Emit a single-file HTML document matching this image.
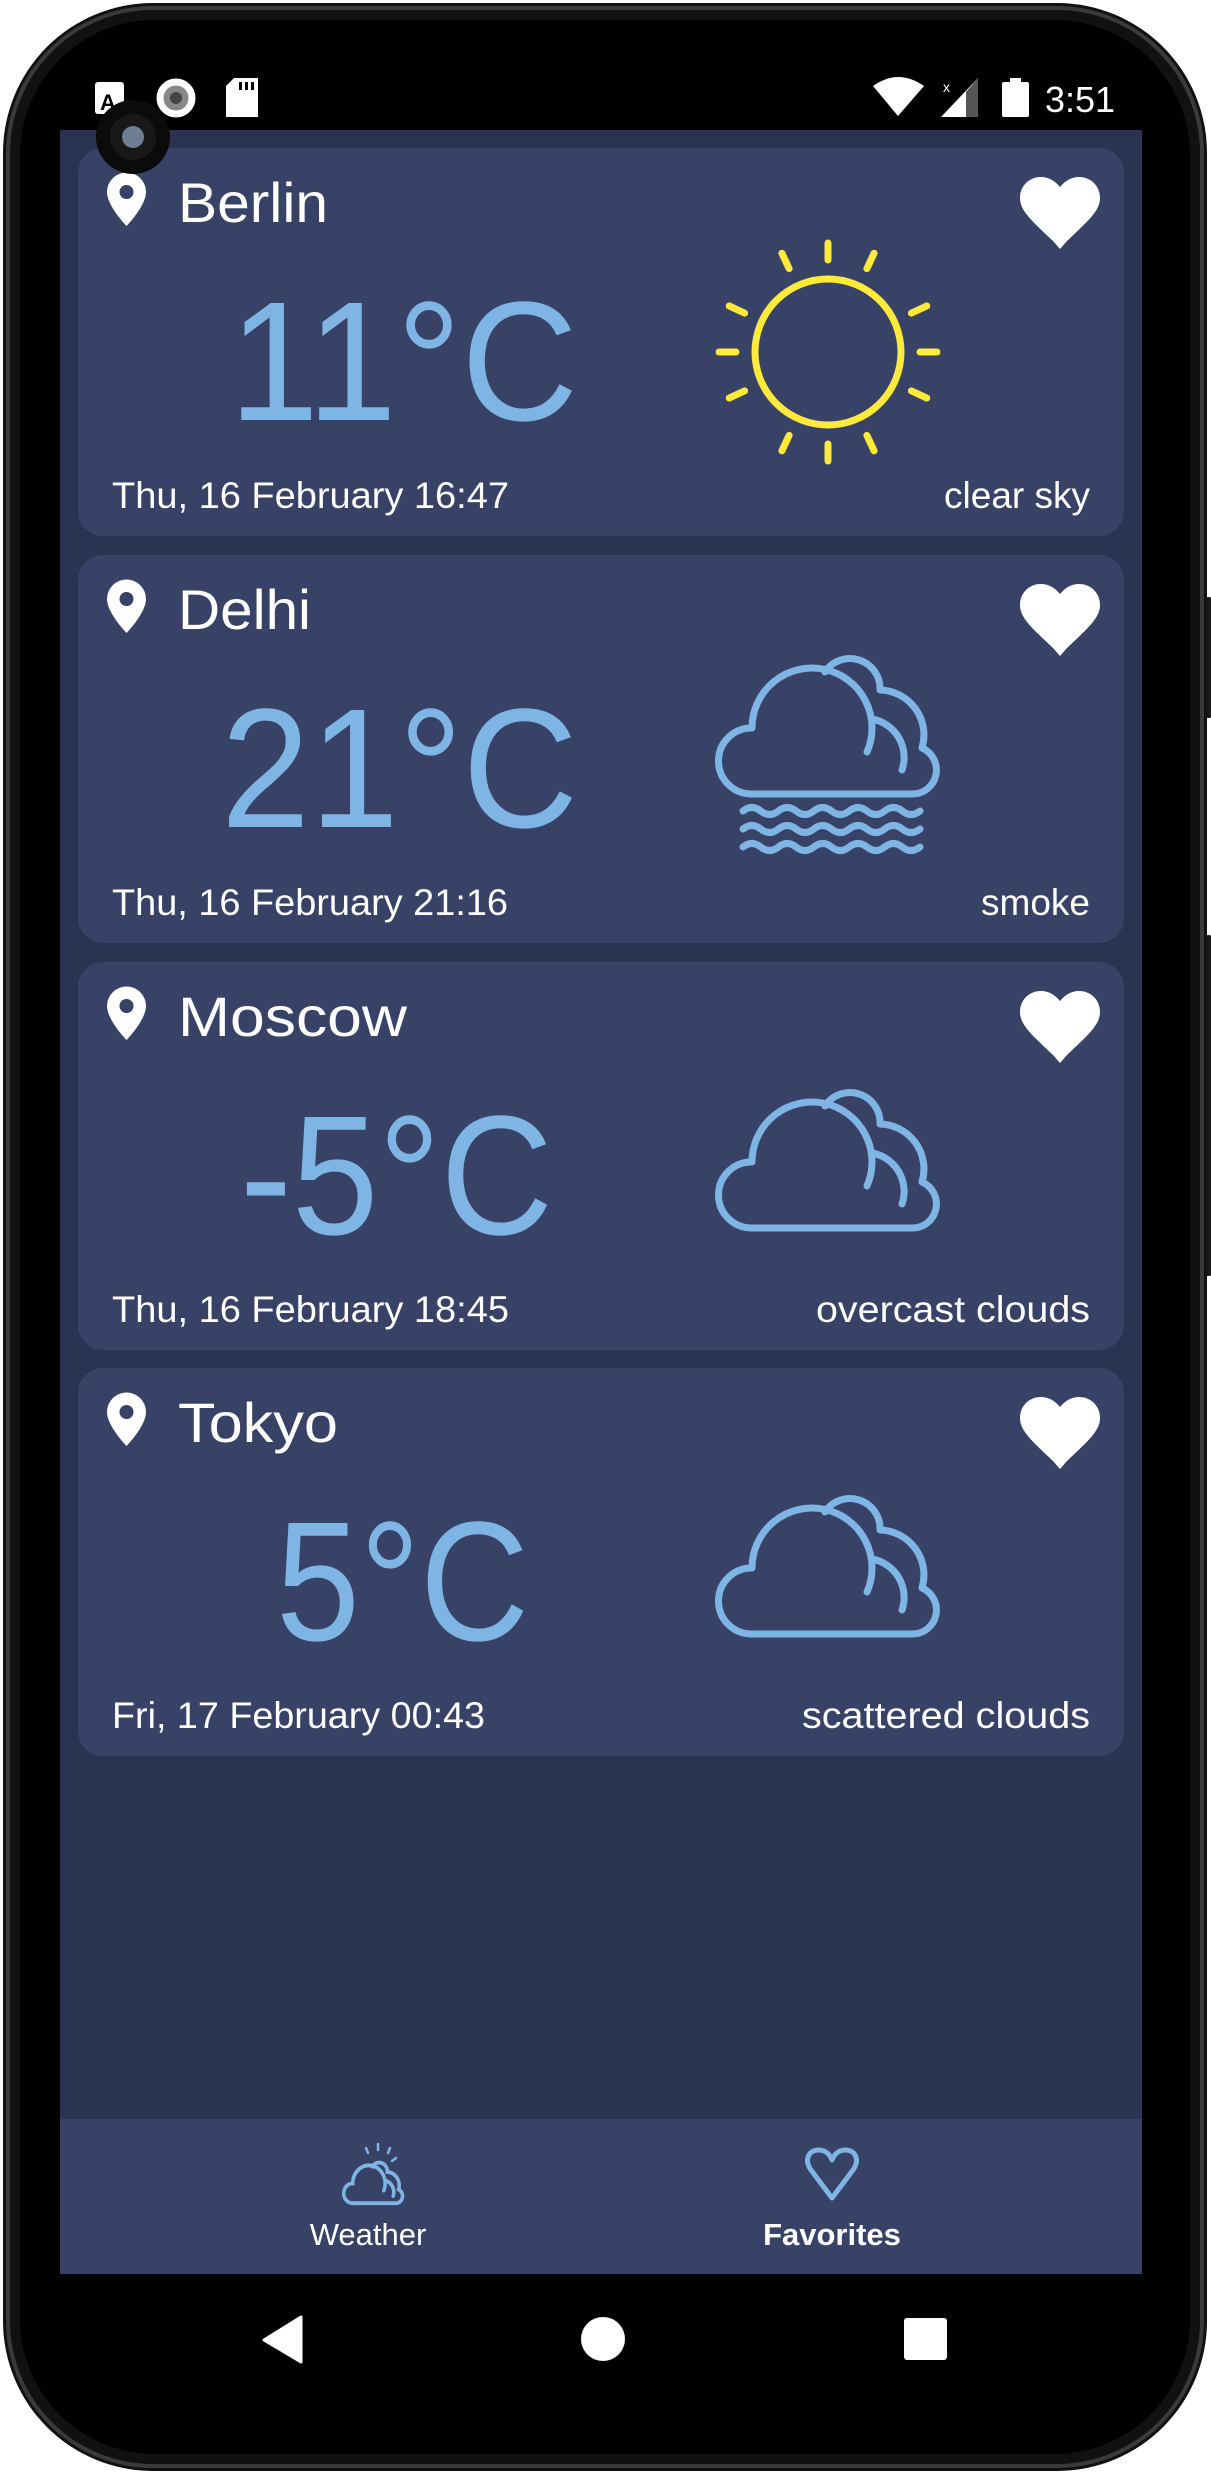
<!DOCTYPE html>
<html><head><meta charset="utf-8"><style>
html,body{margin:0;padding:0;background:#fff;width:1211px;height:2474px;overflow:hidden}
svg{display:block}
text{font-family:"Liberation Sans",sans-serif}
</style></head><body>
<svg width="1211" height="2474" viewBox="0 0 1211 2474" xmlns="http://www.w3.org/2000/svg">
<defs>
<g id="cloud" fill="none" stroke="#7fb5e5" stroke-width="7" stroke-linecap="round" stroke-linejoin="round">
<path d="M61 154 A33 33 0 0 1 62 88 A60 60 0 1 1 177 112"/>
<path d="M61 154 L222 154 A24 24 0 0 0 232 108 A45 45 0 0 0 190 50 A30 30 0 0 0 135 32"/>
<path d="M182 79 A39 39 0 0 1 212 130"/>
</g>
<path id="pin" d="M0 0 a19.5 19.5 0 1 1 39 0 c0 14 -19.5 34 -19.5 34 s-19.5 -20 -19.5 -34 z"/>
<path id="heart" d="M40 72 L33 64 C12 44 0 34 0 21 C0 9 9 0 21 0 C29 0 35 4 40 10 C45 4 51 0 59 0 C71 0 80 9 80 21 C80 34 68 44 47 64 Z"/>
<line id="ray" x1="832" y1="260" x2="832" y2="243"/>
</defs>
<!-- phone body -->
<rect x="1202" y="597" width="10" height="121" rx="3" fill="#1a1a1a"/>
<rect x="1202" y="935" width="10" height="341" rx="3" fill="#1a1a1a"/>
<rect x="3" y="3" width="1204" height="2468" rx="150" fill="#111"/>
<rect x="8" y="8" width="1194" height="2458" rx="145" fill="none" stroke="#3a3a3a" stroke-width="4"/>
<rect x="20" y="20" width="1170" height="2434" rx="135" fill="#000"/>
<!-- app -->
<rect x="60" y="130" width="1082" height="1990" fill="#2a3352"/>
<rect x="60" y="2119" width="1082" height="155" fill="#384266"/>

<!-- status bar -->
<rect x="95" y="82" width="29" height="32" rx="3" fill="#fff"/>
<text x="100" y="110" font-size="22" font-weight="bold" fill="#000">A</text>
<circle cx="176" cy="98" r="16" fill="#888" stroke="#fff" stroke-width="7"/>
<circle cx="176" cy="98" r="6" fill="#444"/>
<path d="M234 78 H258 V117 H226 V86 Z" fill="#fff"/>
<rect x="239" y="82" width="3" height="8" fill="#000"/><rect x="245" y="82" width="3" height="8" fill="#000"/><rect x="251" y="82" width="3" height="8" fill="#000"/>
<path d="M873 86 Q898 68 924 86 L898 116 Z" fill="#fff"/>
<path d="M978 78 V117 H941 Z" fill="#fff"/>
<path d="M978 78 V117 H966 V92 Z" fill="#555"/>
<text x="943" y="92" font-size="14" fill="#fff">x</text>
<rect x="1002" y="82" width="27" height="35" rx="2" fill="#fff"/>
<rect x="1010" y="78" width="11" height="5" fill="#fff"/>
<text x="1045" y="112" font-size="36" fill="#fff">3:51</text>

<!-- Card 1 Berlin -->
<rect x="78" y="148" width="1046" height="388" rx="25" fill="#384266"/>
<use href="#pin" x="107" y="192" fill="#fff"/><circle cx="126.5" cy="192" r="7" fill="#384266"/>
<text x="178" y="222" font-size="56" fill="#fff" textLength="150" lengthAdjust="spacingAndGlyphs">Berlin</text>
<use href="#heart" x="1020" y="177" fill="#fff"/>
<text x="229" y="420" font-size="170" fill="#7fb5e5" textLength="349" lengthAdjust="spacingAndGlyphs">11°C</text>
<g stroke="#ffe93b" stroke-width="7" stroke-linecap="round" fill="none">
<circle cx="828" cy="352" r="73"/>
<g transform="translate(-4 0)">
<use href="#ray"/>
<use href="#ray" transform="rotate(25 832 352)"/>
<use href="#ray" transform="rotate(65 832 352)"/>
<use href="#ray" transform="rotate(90 832 352)"/>
<use href="#ray" transform="rotate(115 832 352)"/>
<use href="#ray" transform="rotate(155 832 352)"/>
<use href="#ray" transform="rotate(180 832 352)"/>
<use href="#ray" transform="rotate(205 832 352)"/>
<use href="#ray" transform="rotate(245 832 352)"/>
<use href="#ray" transform="rotate(270 832 352)"/>
<use href="#ray" transform="rotate(295 832 352)"/>
<use href="#ray" transform="rotate(335 832 352)"/>
</g>
</g>
<text x="112" y="508" font-size="37" fill="#fff" textLength="397" lengthAdjust="spacingAndGlyphs">Thu, 16 February 16:47</text>
<text x="1090" y="508" font-size="37" fill="#fff" text-anchor="end">clear sky</text>

<!-- Card 2 Delhi -->
<rect x="78" y="555" width="1046" height="388" rx="25" fill="#384266"/>
<use href="#pin" x="107" y="599" fill="#fff"/><circle cx="126.5" cy="599" r="7" fill="#384266"/>
<text x="178" y="629" font-size="56" fill="#fff" textLength="133" lengthAdjust="spacingAndGlyphs">Delhi</text>
<use href="#heart" x="1020" y="584" fill="#fff"/>
<text x="221" y="827" font-size="170" fill="#7fb5e5" textLength="357" lengthAdjust="spacingAndGlyphs">21°C</text>
<g transform="translate(690 640)">
<use href="#cloud"/>
<g fill="none" stroke="#7fb5e5" stroke-width="7" stroke-linecap="round">
<path d="M53 171 q8.85 -7 17.7 0 t17.7 0 t17.7 0 t17.7 0 t17.7 0 t17.7 0 t17.7 0 t17.7 0 t17.7 0 t17.7 0"/>
<path d="M53 189 q8.85 -7 17.7 0 t17.7 0 t17.7 0 t17.7 0 t17.7 0 t17.7 0 t17.7 0 t17.7 0 t17.7 0 t17.7 0"/>
<path d="M53 207 q8.85 -7 17.7 0 t17.7 0 t17.7 0 t17.7 0 t17.7 0 t17.7 0 t17.7 0 t17.7 0 t17.7 0 t17.7 0"/>
</g></g>
<text x="112" y="915" font-size="37" fill="#fff" textLength="396" lengthAdjust="spacingAndGlyphs">Thu, 16 February 21:16</text>
<text x="1090" y="915" font-size="37" fill="#fff" text-anchor="end">smoke</text>

<!-- Card 3 Moscow -->
<rect x="78" y="962" width="1046" height="388" rx="25" fill="#384266"/>
<use href="#pin" x="107" y="1006" fill="#fff"/><circle cx="126.5" cy="1006" r="7" fill="#384266"/>
<text x="178" y="1036" font-size="56" fill="#fff" textLength="229" lengthAdjust="spacingAndGlyphs">Moscow</text>
<use href="#heart" x="1020" y="991" fill="#fff"/>
<text x="240" y="1234" font-size="170" fill="#7fb5e5" textLength="313" lengthAdjust="spacingAndGlyphs">-5°C</text>
<use href="#cloud" transform="translate(690 1074)"/>
<text x="112" y="1322" font-size="37" fill="#fff" textLength="397" lengthAdjust="spacingAndGlyphs">Thu, 16 February 18:45</text>
<text x="1090" y="1322" font-size="37" fill="#fff" text-anchor="end" textLength="274" lengthAdjust="spacingAndGlyphs">overcast clouds</text>

<!-- Card 4 Tokyo -->
<rect x="78" y="1368" width="1046" height="388" rx="25" fill="#384266"/>
<use href="#pin" x="107" y="1412" fill="#fff"/><circle cx="126.5" cy="1412" r="7" fill="#384266"/>
<text x="178" y="1442" font-size="56" fill="#fff" textLength="160" lengthAdjust="spacingAndGlyphs">Tokyo</text>
<use href="#heart" x="1020" y="1397" fill="#fff"/>
<text x="276" y="1640" font-size="170" fill="#7fb5e5" textLength="253" lengthAdjust="spacingAndGlyphs">5°C</text>
<use href="#cloud" transform="translate(690 1480)"/>
<text x="112" y="1728" font-size="37" fill="#fff" textLength="373" lengthAdjust="spacingAndGlyphs">Fri, 17 February 00:43</text>
<text x="1090" y="1728" font-size="37" fill="#fff" text-anchor="end" textLength="288" lengthAdjust="spacingAndGlyphs">scattered clouds</text>

<!-- bottom nav -->
<g transform="translate(336 2157) scale(0.27 0.3)">
<g fill="none" stroke="#7fb5e5" stroke-width="13" stroke-linecap="round">
<path d="M61 154 A33 33 0 0 1 62 88 A60 60 0 1 1 177 112"/>
<path d="M61 154 L222 154 A24 24 0 0 0 232 108 A45 45 0 0 0 190 50 A30 30 0 0 0 135 32"/>
<path d="M182 79 A39 39 0 0 1 212 130"/>
</g></g>
<g stroke="#7fb5e5" stroke-width="2.5" stroke-linecap="round">
<line x1="378" y1="2144" x2="378" y2="2150"/>
<line x1="366" y1="2148" x2="368" y2="2153"/>
<line x1="390" y1="2148" x2="388" y2="2153"/>
<line x1="396" y1="2158" x2="392" y2="2161"/>
</g>
<path d="M832 2198 L811 2170 C804 2160 808 2150 819 2150 C826 2150 830 2155 832 2160 C834 2155 838 2150 845 2150 C856 2150 860 2160 853 2170 Z" fill="none" stroke="#7fb5e5" stroke-width="5" stroke-linejoin="round"/>
<text x="368" y="2245" font-size="31" fill="#fff" text-anchor="middle">Weather</text>
<text x="832" y="2245" font-size="31" font-weight="bold" fill="#fff" text-anchor="middle">Favorites</text>

<!-- system nav -->
<path d="M301 2317 L301 2362 L264 2340 Z" fill="#fff" stroke="#fff" stroke-width="3" stroke-linejoin="round"/>
<circle cx="603" cy="2339" r="22" fill="#fff"/>
<rect x="904" y="2318" width="43" height="42" rx="3" fill="#fff"/>

<!-- camera -->
<circle cx="133" cy="137" r="37" fill="#0b0b0b"/>
<circle cx="133" cy="137" r="23" fill="#181818"/>
<circle cx="133" cy="137" r="11" fill="#6d7e95"/>
</svg>
</body></html>
